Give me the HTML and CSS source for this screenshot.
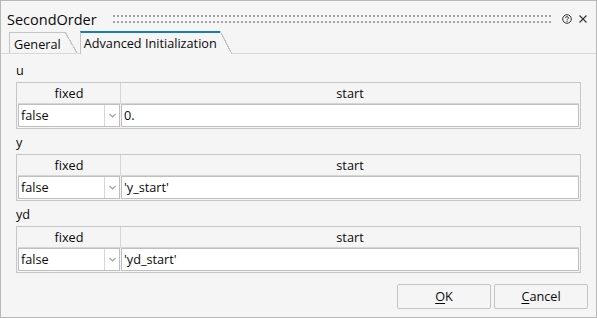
FILE: index.html
```html
<!DOCTYPE html>
<html lang="en">
<head>
    <meta charset="UTF-8">
    <title>SecondOrder</title>
    <link rel="stylesheet" href="styles.css">
</head>
<body>
    <div class="dialog">
        <div class="titlebar">
            <span class="title">SecondOrder</span>
            <span class="grip"></span>
            <svg class="icon-help" width="10" height="10" viewBox="0 0 10 10">
                <circle cx="5" cy="5" r="4.3" fill="none" stroke="#333" stroke-width="1"/>
                <path d="M3.6 4 a1.4 1.4 0 1 1 1.9 1.3 q-0.5 0.2 -0.5 0.8 v0.3" fill="none" stroke="#333" stroke-width="1"/>
                <rect x="4.5" y="7" width="1" height="1" fill="#333"/>
            </svg>
            <svg class="icon-close" width="8" height="8" viewBox="0 0 8 8">
                <path d="M0.5 0.5 L7.5 7.5 M7.5 0.5 L0.5 7.5" stroke="#333" stroke-width="1.1"/>
            </svg>
        </div>

        <div class="tabs">
            <div class="tab">General</div>
            <div class="tab active">Advanced Initialization</div>
        </div>

        <div class="panel">
            <!-- u -->
            <div class="group">
                <div class="group-label">u</div>
                <div class="grid">
                    <div class="grid-head">
                        <div class="head-cell fixed">fixed</div>
                        <div class="head-cell">start</div>
                    </div>
                    <div class="grid-row">
                        <div class="cell select">
                            <span class="select-text">false</span>
                            <span class="arrow"><svg width="7" height="5" viewBox="0 0 7 5"><path d="M0.5 0.8 L3.5 3.8 L6.5 0.8" fill="none" stroke="#9a9a9a" stroke-width="1.2"/></svg></span>
                        </div>
                        <div class="cell value">0.</div>
                    </div>
                </div>
            </div>

            <!-- y -->
            <div class="group">
                <div class="group-label">y</div>
                <div class="grid">
                    <div class="grid-head">
                        <div class="head-cell fixed">fixed</div>
                        <div class="head-cell">start</div>
                    </div>
                    <div class="grid-row">
                        <div class="cell select">
                            <span class="select-text">false</span>
                            <span class="arrow"><svg width="7" height="5" viewBox="0 0 7 5"><path d="M0.5 0.8 L3.5 3.8 L6.5 0.8" fill="none" stroke="#9a9a9a" stroke-width="1.2"/></svg></span>
                        </div>
                        <div class="cell value">'y_start'</div>
                    </div>
                </div>
            </div>

            <!-- yd -->
            <div class="group">
                <div class="group-label">yd</div>
                <div class="grid">
                    <div class="grid-head">
                        <div class="head-cell fixed">fixed</div>
                        <div class="head-cell">start</div>
                    </div>
                    <div class="grid-row">
                        <div class="cell select">
                            <span class="select-text">false</span>
                            <span class="arrow"><svg width="7" height="5" viewBox="0 0 7 5"><path d="M0.5 0.8 L3.5 3.8 L6.5 0.8" fill="none" stroke="#9a9a9a" stroke-width="1.2"/></svg></span>
                        </div>
                        <div class="cell value">'yd_start'</div>
                    </div>
                </div>
            </div>
        </div>

        <div class="buttons">
            <button class="btn"><u>O</u>K</button>
            <button class="btn"><u>C</u>ancel</button>
        </div>
    </div>
</body>
</html>
```

FILE: styles.css
```css
/* Reset */
* {
    margin: 0;
    padding: 0;
    box-sizing: border-box;
}
body {
    font-family: 'Open Sans', 'Noto Sans', sans-serif;
    font-size: 12.7px;
    color: #0a0a0a;
    background: #f5f5f5;
}
.dialog {
    width: 597px;
    height: 318px;
    border: 1px solid #b8b8b8;
    background: #f5f5f5;
    display: flex;
    flex-direction: column;
}

/* Title bar */
.titlebar {
    display: flex;
    align-items: flex-start;
    height: 30px;
    padding: 9px 9px 0 6px;
}
.title {
    font-size: 14.5px;
    line-height: 20px;
}
.grip {
    flex: 1;
    height: 8px;
    margin: 5px 9px 0 16px;
    background-image: linear-gradient(90deg, #a4a4a4 2px, transparent 2px),
                      linear-gradient(90deg, #a4a4a4 2px, transparent 2px);
    background-size: 4px 2px, 4px 2px;
    background-position: 0 0, 0 6px;
    background-repeat: repeat-x;
}
.icon-help {
    margin-top: 4px;
}
.icon-close {
    margin: 5px 0 0 7px;
}

/* Tabs */
.tabs {
    display: flex;
    align-items: flex-end;
    height: 23px;
    padding-left: 8px;
    border-bottom: 1px solid #d9d9d9;
}
.tab {
    position: relative;
    height: 21px;
    padding: 2px 4px 0 4px;
    line-height: 18px;
    border-left: 1px solid #c4c4c4;
    border-top: 1px solid #c4c4c4;
    margin-right: 15px;
    white-space: nowrap;
}
.tab::after {
    content: "";
    position: absolute;
    top: -1px;
    bottom: 0;
    right: -12px;
    width: 12px;
    background: linear-gradient(to top right, transparent calc(50% - 0.6px), #c4c4c4 calc(50% - 0.6px), #c4c4c4 calc(50% + 0.6px), transparent calc(50% + 0.6px));
}
.tab.active {
    height: 23px;
    margin-bottom: -1px;
    padding: 1px 3px 0 3px;
    border-top: 2px solid #1a7cb0;
    background: #f5f5f5;
}
.tab.active::after {
    top: -2px;
    background: linear-gradient(to top right, #f5f5f5 calc(50% - 0.6px), #c4c4c4 calc(50% - 0.6px), #c4c4c4 calc(50% + 0.6px), transparent calc(50% + 0.6px));
}

/* Panel */
.panel {
    padding: 8px 15px 0 15px;
}
.group {
    margin-bottom: 5px;
}
.group-label {
    height: 17px;
    line-height: 17px;
    margin-bottom: 3px;
}
.grid {
    border: 1px solid #c6c6c6;
    padding: 0 1px 1px 1px;
}
.grid-head {
    display: flex;
    height: 21px;
    border-bottom: 1px solid #d6d6d6;
}
.head-cell {
    flex: 1;
    text-align: center;
    line-height: 20px;
}
.head-cell.fixed {
    flex: 0 0 103px;
    border-right: 1px solid #d6d6d6;
}
.grid-row {
    display: flex;
    gap: 1px;
    height: 23px;
}
.cell {
    background: #fff;
    border: 1px solid #bfbfbf;
    line-height: 21px;
    padding-left: 2px;
}
.cell.select {
    flex: 0 0 102px;
    display: flex;
    padding-left: 2px;
}
.select-text {
    flex: 1;
}
.arrow {
    width: 15px;
    border-left: 1px solid #d6d6d6;
    display: flex;
    align-items: center;
    justify-content: center;
}
.cell.value {
    flex: 1;
}

/* Buttons */
.buttons {
    margin-top: auto;
    display: flex;
    justify-content: flex-end;
    gap: 3px;
    padding: 0 8px 8px 0;
}
.btn {
    width: 94px;
    height: 25px;
    border: 1px solid #c4c4c4;
    border-radius: 2px;
    background: #f5f5f5;
    font: inherit;
    color: #0a0a0a;
    line-height: 21px;
    text-align: center;
}
.btn u {
    text-underline-offset: 2px;
}
```
